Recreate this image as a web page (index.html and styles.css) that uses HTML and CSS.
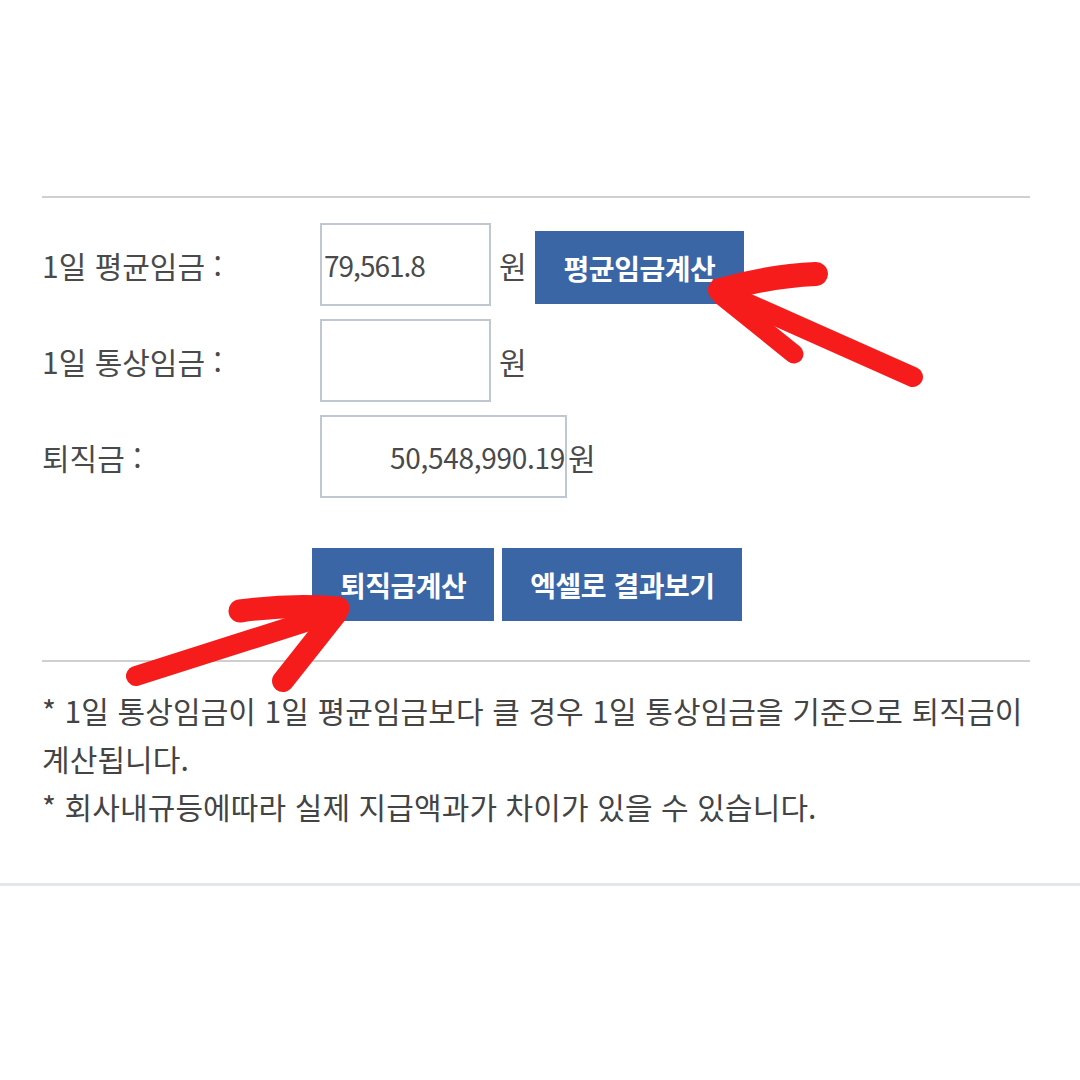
FILE: index.html
```html
<!DOCTYPE html>
<html lang="ko">
<head>
    <meta charset="UTF-8" />
    <meta name="viewport" content="width=device-width, initial-scale=1" />
    <title>퇴직금 계산</title>
    <link rel="stylesheet" href="styles.css">
</head>
<body>
    <div class="calc">
        <div class="rule"></div>
        <div class="form">
            <div class="row">
                <span class="label">1일 평균임금 :</span>
                <input class="field" type="text" value="79,561.8" />
                <span class="unit">원</span>
                <button class="btn btn-avg">평균임금계산</button>
            </div>
            <div class="row">
                <span class="label">1일 통상임금 :</span>
                <input class="field" type="text" value="" />
                <span class="unit">원</span>
            </div>
            <div class="row">
                <span class="label">퇴직금 :</span>
                <input class="field field-wide" type="text" value="50,548,990.19" />
                <span class="unit unit-tight">원</span>
            </div>
        </div>
        <div class="actions">
            <button class="btn">퇴직금계산</button>
            <button class="btn">엑셀로 결과보기</button>
        </div>
        <div class="rule"></div>
        <div class="notes">
            <p>* 1일 통상임금이 1일 평균임금보다 클 경우 1일 통상임금을 기준으로 퇴직금이 계산됩니다.</p>
            <p>* 회사내규등에따라 실제 지급액과가 차이가 있을 수 있습니다.</p>
        </div>
    </div>
    <div class="bottom-rule"></div>

    <!-- hand drawn marker arrows over the form -->
    <svg class="marks" width="1080" height="1080" viewBox="0 0 1080 1080">
        <g stroke="#f71c1c" stroke-linecap="round" stroke-linejoin="round" fill="none">
            <path d="M722 292 L913 377" stroke-width="20" />
            <path d="M720 290 Q770 276 816 274" stroke-width="24" />
            <path d="M722 296 L794 354" stroke-width="19" />

            <path d="M337 612 L136 676" stroke-width="20" />
            <path d="M338 608 Q290 604 240 611" stroke-width="23" />
            <path d="M336 614 L283 681" stroke-width="22" />
        </g>
    </svg>
</body>
</html>
```

FILE: styles.css
```css
:root {
    --text: #4a4a4a;
    --blue: #3b66a6;
    --rule: #cfcfcf;
    --field-border: #bfc7d3;
    --font-family: "Noto Sans CJK KR", "Noto Sans", sans-serif;
}

html, body {
    margin: 0;
    padding: 0;
    background: #fff;
    font-family: var(--font-family);
    color: var(--text);
}

body {
    position: relative;
    width: 1080px;
    height: 1080px;
    overflow: hidden;
}

.calc {
    margin: 196px 50px 0 42px;
}

.rule {
    height: 2px;
    background: var(--rule);
}

.form {
    display: flex;
    flex-direction: column;
    gap: 13px;
    padding-top: 25px;
}

.row {
    display: flex;
    align-items: center;
    height: 83px;
}

.label {
    width: 278px;
    font-size: 30px;
}

.field {
    box-sizing: border-box;
    width: 171px;
    height: 83px;
    margin: 0;
    padding: 0 2px;
    border: 2px solid var(--field-border);
    background: #fff;
    font-family: var(--font-family);
    font-size: 28px;
    letter-spacing: -1px;
    color: var(--text);
    outline: none;
}

.field-wide {
    width: 247px;
    padding: 0;
    text-align: right;
    letter-spacing: -0.3px;
}

.unit {
    margin-left: 8px;
    font-size: 30px;
}

.unit-tight {
    margin-left: 1px;
}

.btn {
    height: 73px;
    margin: 0;
    padding: 0 28px;
    border: none;
    background: var(--blue);
    color: #fff;
    font-family: var(--font-family);
    font-size: 28px;
    font-weight: 700;
    letter-spacing: -0.5px;
    cursor: pointer;
}

.btn-avg {
    margin-left: 8px;
    margin-top: 6px;
    padding: 0 29px;
}

.actions {
    display: flex;
    gap: 8px;
    margin-top: 50px;
    padding-left: 270px;
}

.actions + .rule {
    margin-top: 39px;
}

.notes {
    padding-top: 24px;
}

.notes p {
    margin: 0;
    font-size: 30px;
    line-height: 48px;
    letter-spacing: 0.1px;
    color: #444;
}

.bottom-rule {
    height: 3px;
    margin-top: 53px;
    background: #e1e7ea;
}

.marks {
    position: absolute;
    left: 0;
    top: 0;
    pointer-events: none;
}
```
